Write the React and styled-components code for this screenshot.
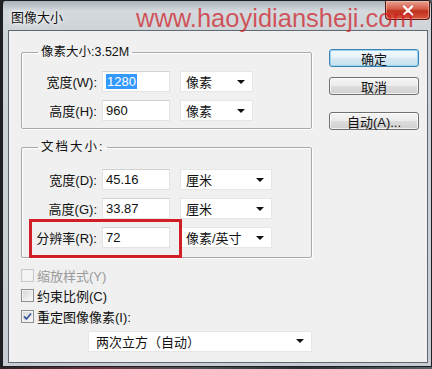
import React from 'react';
import styled, { createGlobalStyle } from 'styled-components';

const GlobalStyle = createGlobalStyle`
  html, body {
    margin: 0;
    padding: 0;
  }
  body {
    width: 432px;
    height: 369px;
    overflow: hidden;
    background: linear-gradient(90deg, #2c2326 0%, #6a3540 22%, #4d5257 45%, #2b3136 70%, #56656b 100%);
    font-family: "Liberation Sans", "Noto Sans CJK SC", sans-serif;
  }
`;

const Window = styled.div`
  position: relative;
  box-sizing: border-box;
  width: 432px;
  height: 367px;
  display: flex;
  flex-direction: column;
  border: 1px solid #1d1f22;
  border-left: 3px solid #1d1f22;
  border-radius: 5px 5px 0 0;
  padding: 0 3px 3px 5px;
  background: linear-gradient(180deg, #a9b2ba 0px, #d4d9dd 10px, #cfd4d8 29px, #c6ccd1 100%);
`;

const TitleBar = styled.div`
  height: 29px;
  display: flex;
  align-items: flex-start;
`;

const Title = styled.span`
  padding: 9px 0 0 3px;
  font-size: 13px;
  line-height: 15px;
  color: #111;
  text-shadow: 0 0 6px #fff, 0 0 3px #fff;
`;

const Close = styled.div`
  margin-left: auto;
  margin-right: -2px;
  width: 45px;
  height: 19px;
  box-sizing: border-box;
  display: flex;
  align-items: center;
  justify-content: center;
  border: 1px solid #5a1a14;
  border-top: none;
  border-radius: 0 0 4px 4px;
  background: linear-gradient(180deg, #e8a493 0%, #d45a45 45%, #c0301c 55%, #d8553c 100%);
  box-shadow: inset 0 0 0 1px rgba(255, 200, 190, 0.5);
`;

const Watermark = styled.div`
  position: absolute;
  top: 2px;
  left: 133px;
  font-family: "Liberation Sans", sans-serif;
  font-size: 25.5px;
  line-height: 30px;
  color: rgba(206, 28, 38, 0.72);
  pointer-events: none;
  white-space: nowrap;
`;

const Content = styled.div`
  flex: 1;
  display: flex;
  padding: 14px 0 0 12px;
  background: #f0f0f0;
  border: 1px solid #5f6870;
`;

const LeftColumn = styled.div`
  width: 291px;
  display: flex;
  flex-direction: column;
`;

const RightColumn = styled.div`
  margin: 4px 0 0 17px;
  display: flex;
  flex-direction: column;
`;

const Group = styled.fieldset`
  margin: ${p => p.$top || 0}px 0 0;
  padding: ${p => p.$padTop}px 0 ${p => p.$padBottom}px 5px;
  border: 1px solid #a9a9a9;
  border-radius: 2px;
  box-shadow: inset 1px 1px 0 #fff, 1px 1px 0 #fff;
  display: flex;
  flex-direction: column;
  gap: 8px;
`;

const Legend = styled.legend`
  margin-left: 11px;
  padding: 0 3px;
  font-size: 12.5px;
  line-height: 14px;
  color: #111;
  letter-spacing: ${p => p.$spaced ? '2px' : '0'};
`;

const Row = styled.div`
  position: relative;
  height: 21px;
  display: flex;
  align-items: center;
`;

const Label = styled.span`
  width: 70px;
  margin-right: 5px;
  text-align: right;
  font-size: 13px;
  color: #111;
  white-space: nowrap;
`;

const Field = styled.div`
  box-sizing: border-box;
  width: 68px;
  height: 21px;
  display: flex;
  align-items: center;
  padding-left: 3px;
  background: #fff;
  border: 1px solid #e3e3e3;
  border-top-color: #d2d2d2;
  font-size: 13px;
  color: #111;
`;

const Selected = styled.span`
  background: #3399ff;
  color: #fff;
  padding: 0 1px;
`;

const Select = styled.div`
  box-sizing: border-box;
  width: ${p => p.$width}px;
  height: 21px;
  margin-left: ${p => p.$gap || 0}px;
  display: flex;
  align-items: center;
  padding: 0 7px 0 5px;
  background: #fff;
  border: 1px solid #e6e6e6;
  font-size: 13px;
  color: #111;
`;

const Arrow = styled.span`
  margin-left: auto;
  width: 0;
  height: 0;
  border-left: 4px solid transparent;
  border-right: 4px solid transparent;
  border-top: 4px solid #111;
`;

const Highlight = styled.div`
  position: absolute;
  top: -8px;
  left: 2px;
  width: 153px;
  height: 39px;
  box-sizing: border-box;
  border: 3px solid #d21f27;
  pointer-events: none;
`;

const Checks = styled.div`
  padding-top: 7px;
  display: flex;
  flex-direction: column;
`;

const CheckRow = styled.div`
  height: 20.5px;
  display: flex;
  align-items: center;
  font-size: 13px;
  color: ${p => p.$disabled ? '#9a9a9a' : '#111'};
`;

const Box = styled.span`
  box-sizing: border-box;
  width: 13px;
  height: 13px;
  margin-right: 3px;
  display: flex;
  align-items: center;
  justify-content: center;
  border: 1px solid ${p => p.$disabled ? '#c9c9c9' : '#8e8f8f'};
  background: ${p => p.$disabled
    ? '#f4f4f4'
    : 'linear-gradient(135deg, #d6d6d6 0%, #ececec 60%, #fafafa 100%)'};
  box-shadow: inset 0 0 0 1px ${p => p.$disabled ? '#f0f0f0' : '#f4f4f4'};
`;

const Dropdown = styled(Select)`
  margin: 4px 0 0 67px;
  padding-left: 7px;
`;

const Button = styled.div`
  box-sizing: border-box;
  width: 90px;
  height: 18px;
  margin-top: ${p => p.$top || 0}px;
  display: flex;
  align-items: center;
  justify-content: center;
  font-size: 13px;
  color: #111;
  border: 1px solid ${p => p.$primary ? '#3c7fb1' : '#707070'};
  border-radius: 3px;
  background: ${p => p.$primary
    ? 'linear-gradient(180deg, #f1f8fc 0%, #e6f2f9 50%, #d5e8f3 51%, #c8e1ef 100%)'
    : 'linear-gradient(180deg, #f4f4f4 0%, #ebebeb 50%, #dddddd 51%, #d0d0d0 100%)'};
  box-shadow: inset 0 0 0 1px ${p => p.$primary ? '#98d6f2' : 'rgba(255,255,255,0.7)'};
`;

const CheckMark = () => (
  <svg width="9" height="9" viewBox="0 0 9 9">
    <path d="M1 4.5 L3.5 7 L8 1.5" fill="none" stroke="#3c5a9a" strokeWidth="1.8" />
  </svg>
);

const CloseX = () => (
  <svg width="12" height="11" viewBox="0 0 12 11">
    <path d="M2 1.5 L10 9.5 M10 1.5 L2 9.5" stroke="#fff" strokeWidth="2.4" strokeLinecap="round" />
  </svg>
);

export default function App() {
  return (
    <>
      <GlobalStyle />
      <Window>
        <TitleBar>
          <Title>图像大小</Title>
          <Close><CloseX /></Close>
        </TitleBar>
        <Watermark>www.haoyidiansheji.com</Watermark>
        <Content>
          <LeftColumn>
            <Group $padTop={12} $padBottom={7}>
              <Legend>像素大小:3.52M</Legend>
              <Row>
                <Label>宽度(W):</Label>
                <Field><Selected>1280</Selected></Field>
                <Select $width={73} $gap={10}>像素<Arrow /></Select>
              </Row>
              <Row>
                <Label>高度(H):</Label>
                <Field>960</Field>
                <Select $width={73} $gap={10}>像素<Arrow /></Select>
              </Row>
            </Group>
            <Group $top={11} $padTop={15} $padBottom={9}>
              <Legend $spaced>文档大小:</Legend>
              <Row>
                <Label>宽度(D):</Label>
                <Field>45.16</Field>
                <Select $width={92} $gap={10}>厘米<Arrow /></Select>
              </Row>
              <Row>
                <Label>高度(G):</Label>
                <Field>33.87</Field>
                <Select $width={92} $gap={10}>厘米<Arrow /></Select>
              </Row>
              <Row>
                <Label>分辨率(R):</Label>
                <Field>72</Field>
                <Select $width={92} $gap={10}>像素/英寸<Arrow /></Select>
                <Highlight />
              </Row>
            </Group>
            <Checks>
              <CheckRow $disabled>
                <Box $disabled />缩放样式(Y)
              </CheckRow>
              <CheckRow>
                <Box />约束比例(C)
              </CheckRow>
              <CheckRow>
                <Box><CheckMark /></Box>重定图像像素(I):
              </CheckRow>
            </Checks>
            <Dropdown $width={224}>两次立方（自动）<Arrow /></Dropdown>
          </LeftColumn>
          <RightColumn>
            <Button $primary>确定</Button>
            <Button $top={10}>取消</Button>
            <Button $top={17}>自动(A)...</Button>
          </RightColumn>
        </Content>
      </Window>
    </>
  );
}
